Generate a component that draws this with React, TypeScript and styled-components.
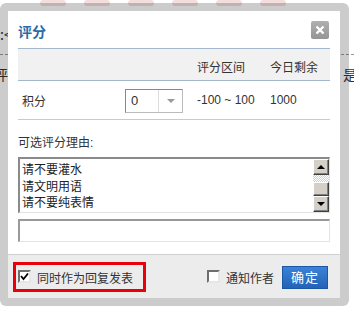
import React from "react";
import styled, {createGlobalStyle} from "styled-components";

const GlobalStyle = createGlobalStyle`
  html, body {
    margin: 0;
    padding: 0;
    background: #fff;
  }
  body {
    font-family: "Liberation Sans", "Noto Sans CJK SC", sans-serif;
    font-size: 12px;
    color: #333;
  }
`;

const Page = styled.div`
  position: relative;
  width: 354px;
  height: 311px;
  overflow: hidden;
  background: #fff;
`;

// page behind the popup, only slivers of it are visible
const Banner = styled.div`
  height: 9px;
  display: flex;
  gap: 18px;
  padding-left: 40px;
  & > span {
    width: 26px;
    height: 6px;
    border-radius: 3px;
    background: #f3dede;
  }
`;

const BackRow = styled.div<{ $top: number }>`
  display: flex;
  justify-content: space-between;
  margin-top: ${p => p.$top}px;
  font-size: 14px;
  line-height: 16px;
  color: #333;
  font-family: "Noto Sans CJK SC", sans-serif;
  white-space: nowrap;
`;

const CutLeft = styled.span`
  margin-left: -6px;
`;

const CutRight = styled.span`
  margin-right: -17px;
`;

const Dashed = styled.div`
  margin-top: 12px;
  border-top: 1px dashed #999;
`;

const Frame = styled.div`
  position: absolute;
  left: 0;
  top: 3px;
  width: 349px;
  height: 303px;
  box-sizing: border-box;
  padding: 8px 9px 8px 8px;
  border-radius: 6px;
  background: rgba(0, 0, 0, 0.2);
`;

const Dialog = styled.div`
  height: 100%;
  background: #fff;
  display: flex;
  flex-direction: column;
`;

const TitleBar = styled.div`
  height: 37px;
  display: flex;
  align-items: center;
  justify-content: space-between;
  padding: 0 11px 0 10px;
`;

const Title = styled.h3`
  margin: 0;
  font-size: 14px;
  font-weight: bold;
  color: #2b6aa8;
  font-family: "Noto Sans CJK SC", sans-serif;
  line-height: 16px;
  padding-top: 2px;
`;

const CloseBtn = styled.span`
  width: 18px;
  height: 18px;
  border-radius: 2px;
  background: linear-gradient(#b0b0b0, #959595);
  display: flex;
  align-items: center;
  justify-content: center;
`;

const Body = styled.div`
  padding: 0 10px;
`;

const Table = styled.div`
  display: grid;
  grid-template-columns: 107px 72px 73px 1fr;
`;

const HeadCell = styled.div`
  background: #f1f1f1;
  border-top: 1px solid #a3b7cf;
  border-bottom: 1px solid #a3b7cf;
  display: flex;
  align-items: center;
  padding-top: 3px;
  box-sizing: border-box;
  height: 33px;
`;

const Cell = styled.div`
  height: 38px;
  border-bottom: 1px solid #c3ccd6;
  display: flex;
  align-items: center;
`;

const LabelCell = styled(Cell)`
  padding-left: 4px;
`;

const Select = styled.div`
  width: 58px;
  height: 24px;
  box-sizing: border-box;
  border: 1px solid #bbb;
  border-top-color: #888;
  border-left-color: #888;
  display: flex;
  background: #fff;
  margin-top: 2px;
`;

const SelectValue = styled.span`
  flex: 1;
  padding-left: 5px;
  line-height: 22px;
  font-size: 13px;
  color: #333;
  border-right: 1px solid #ddd;
`;

const SelectArrow = styled.span`
  width: 23px;
  display: flex;
  align-items: center;
  justify-content: center;
  &::after {
    content: "";
    border-left: 4px solid transparent;
    border-right: 4px solid transparent;
    border-top: 4px solid #999;
  }
`;

const ReasonLabel = styled.div`
  margin-top: 15px;
  line-height: 16px;
`;

const ListBox = styled.div`
  margin-top: 6px;
  height: 56px;
  box-sizing: border-box;
  border: 1px solid #e3e3e3;
  border-top: 2px solid #8a8a8a;
  border-left: 2px solid #8a8a8a;
  display: flex;
`;

const Options = styled.div`
  flex: 1;
  padding: 3px 0 0 2px;
  line-height: 16.5px;
  font-size: 12px;
  color: #222;
  overflow: hidden;
`;

const ScrollBar = styled.div`
  width: 16px;
  display: flex;
  flex-direction: column;
`;

const ScrollBtn = styled.div<{ $up?: boolean }>`
  height: 16px;
  box-sizing: border-box;
  background: #d4d0c8;
  border: 1px solid;
  border-color: #fff #404040 #404040 #fff;
  box-shadow: inset -1px -1px #808080;
  display: flex;
  align-items: center;
  justify-content: center;
  &::after {
    content: "";
    border-left: 4px solid transparent;
    border-right: 4px solid transparent;
    ${p => p.$up ? "border-bottom: 4px solid #000;" : "border-top: 4px solid #000;"}
  }
`;

const Track = styled.div`
  height: 7px;
  background-color: #fff;
  background-image: linear-gradient(45deg, #d4d0c8 25%, transparent 25%, transparent 75%, #d4d0c8 75%),
    linear-gradient(45deg, #d4d0c8 25%, transparent 25%, transparent 75%, #d4d0c8 75%);
  background-size: 2px 2px;
  background-position: 0 0, 1px 1px;
`;

const Thumb = styled.div`
  flex: 1;
  background: #d4d0c8;
  border: 1px solid;
  border-color: #fff #404040 #404040 #fff;
  box-shadow: inset -1px -1px #808080;
`;

const Input = styled.div`
  margin-top: 6px;
  height: 23px;
  box-sizing: border-box;
  border: 1px solid #e3e3e3;
  border-top: 2px solid #999;
  border-left: 2px solid #999;
`;

const Footer = styled.div`
  margin-top: auto;
  height: 44px;
  box-sizing: border-box;
  border-top: 1px solid #cfcfcf;
  background: #ececec;
  display: flex;
  align-items: flex-start;
  padding: 7px 12px 0 5px;
`;

const Highlight = styled.div`
  width: 133px;
  height: 30px;
  box-sizing: border-box;
  border: 3px solid #e8000b;
  display: flex;
  align-items: center;
  padding-left: 2px;
  gap: 6px;
`;

const CheckBox = styled.span`
  width: 13px;
  height: 13px;
  box-sizing: border-box;
  background: #fff;
  border: 2px solid;
  border-color: #6e6e6e #e6e6e6 #e6e6e6 #6e6e6e;
  display: flex;
  align-items: center;
  justify-content: center;
  margin-bottom: 1px;
`;

const Actions = styled.div`
  margin-left: auto;
  display: flex;
  align-items: center;
  height: 24px;
  margin-top: 3px;
`;

const Notify = styled.label`
  display: flex;
  align-items: center;
  gap: 6px;
  margin-right: 8px;
`;

const Submit = styled.button`
  width: 46px;
  height: 23px;
  border: 1px solid #1b58a3;
  background: linear-gradient(#3a82d8, #2363b7);
  color: #fff;
  font-size: 13px;
  font-family: "Noto Sans CJK SC", sans-serif;
  padding: 0;
  line-height: 20px;
  letter-spacing: 1px;
`;

const reasons = ["请不要灌水", "请文明用语", "请不要纯表情"];

export default function App() {
  return (
    <Page>
      <GlobalStyle/>
      <Banner><span/><span/><span/><span/><span/><span/></Banner>
      <BackRow $top={17}><span>:&lt;</span><span/></BackRow>
      <Dashed/>
      <BackRow $top={11}><CutLeft>评</CutLeft><CutRight>是否</CutRight></BackRow>

      <Frame>
        <Dialog>
          <TitleBar>
            <Title>评分</Title>
            <CloseBtn>
              <svg width="10" height="10" viewBox="0 0 10 10">
                <path d="M1.5 1.5 L8.5 8.5 M8.5 1.5 L1.5 8.5" stroke="#fff" strokeWidth="2.4"/>
              </svg>
            </CloseBtn>
          </TitleBar>
          <Body>
            <Table>
              <HeadCell/>
              <HeadCell/>
              <HeadCell>评分区间</HeadCell>
              <HeadCell>今日剩余</HeadCell>
              <LabelCell>积分</LabelCell>
              <Cell>
                <Select>
                  <SelectValue>0</SelectValue>
                  <SelectArrow/>
                </Select>
              </Cell>
              <Cell>-100 ~ 100</Cell>
              <Cell>1000</Cell>
            </Table>
            <ReasonLabel>可选评分理由:</ReasonLabel>
            <ListBox>
              <Options>
                {reasons.map(r => <div key={r}>{r}</div>)}
              </Options>
              <ScrollBar>
                <ScrollBtn $up/>
                <Track/>
                <Thumb/>
                <ScrollBtn/>
              </ScrollBar>
            </ListBox>
            <Input/>
          </Body>
          <Footer>
            <Highlight>
              <CheckBox>
                <svg width="9" height="9" viewBox="0 0 9 9">
                  <path d="M1 4 L3.5 7 L8 1.5" stroke="#000" strokeWidth="1.8" fill="none"/>
                </svg>
              </CheckBox>
              同时作为回复发表
            </Highlight>
            <Actions>
              <Notify><CheckBox/>通知作者</Notify>
              <Submit>确定</Submit>
            </Actions>
          </Footer>
        </Dialog>
      </Frame>
    </Page>
  );
}
